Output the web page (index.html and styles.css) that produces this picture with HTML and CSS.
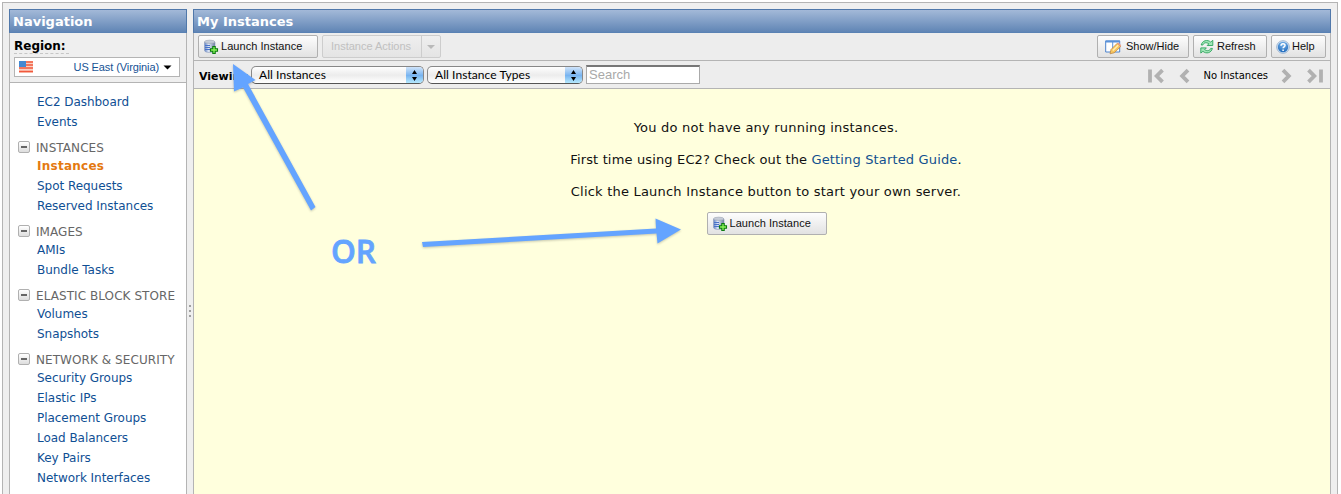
FILE: index.html
```html
<!DOCTYPE html>
<html lang="en">
<head>
<meta charset="utf-8">
<title>My Instances</title>
<link rel="stylesheet" href="styles.css">
</head>
<body>
<svg width="0" height="0" class="defs">
  <defs>
    <linearGradient id="cyl" x1="0" x2="1"><stop offset="0" stop-color="#5f82c8"/><stop offset=".4" stop-color="#e0e8f6"/><stop offset="1" stop-color="#6d7ca0"/></linearGradient>
    <radialGradient id="ball" cx=".5" cy=".25" r=".8"><stop offset="0" stop-color="#7db8ee"/><stop offset="1" stop-color="#1c66b8"/></radialGradient>
    <symbol id="server" viewBox="0 0 16 16">
      <path d="M1.500 3v8.500c0 1 2 2 5 2s5.500-1 5.500-2V3z" fill="url(#cyl)" stroke="#8c9aba" stroke-width=".6"/>
      <ellipse cx="6.700" cy="2.800" rx="5.200" ry="1.600" fill="#c6ccd8" stroke="#979fb0" stroke-width=".6"/>
      <path d="M2 6.500h5M2 8.500h5M2 10.500h5" stroke="#4a73c8" stroke-width="1"/>
      <path d="M9.800 7.500h2.400v2.300h2.300v2.400h-2.300v2.300H9.800v-2.300H7.500V9.800h2.300z" fill="#8cf45a" stroke="#0b7a10" stroke-width="1.100"/>
    </symbol>
  </defs>
</svg>
<div class="frame">
  <aside class="nav">
    <h2 class="bar">Navigation</h2>
    <div class="region">
      <div class="region-label">Region:</div>
      <div class="region-select">
        <svg width="14" height="12" viewBox="0 0 14 12"><path fill="#fbd0c2" d="M0 0h14v12H0z"/><path d="M0 1h14M0 4h14M0 7h14M0 10.500h14" stroke="#f1583c" stroke-width="1.700"/><path fill="#4489d2" d="M0 0h7v6H0z"/></svg>
        <span class="region-name">US East (Virginia)</span>
        <svg width="9" height="5" viewBox="0 0 9 5"><path d="M.5.500h8L4.500 4.500z"/></svg>
      </div>
    </div>
    <ul class="links first"><li>EC2 Dashboard</li><li>Events</li></ul>
    <h3 class="group"><i class="minus"></i>INSTANCES</h3>
    <ul class="links"><li class="current">Instances</li><li>Spot Requests</li><li>Reserved Instances</li></ul>
    <h3 class="group"><i class="minus"></i>IMAGES</h3>
    <ul class="links"><li>AMIs</li><li>Bundle Tasks</li></ul>
    <h3 class="group"><i class="minus"></i>ELASTIC BLOCK STORE</h3>
    <ul class="links"><li>Volumes</li><li>Snapshots</li></ul>
    <h3 class="group"><i class="minus"></i>NETWORK &amp; SECURITY</h3>
    <ul class="links"><li>Security Groups</li><li>Elastic IPs</li><li>Placement Groups</li><li>Load Balancers</li><li>Key Pairs</li><li>Network Interfaces</li></ul>
  </aside>
  <div class="splitter"><i></i><i></i><i></i></div>
  <main class="main">
    <h2 class="bar">My Instances</h2>
    <div class="toolbar">
      <button class="btn launch"><svg width="16" height="16"><use href="#server"/></svg><span>Launch Instance</span></button>
      <div class="btn actions"><span class="actions-text">Instance Actions</span><span class="actions-arrow"><svg width="8" height="4" viewBox="0 0 8 4"><path fill="#b9b9b9" d="M0 0h8L4 4z"/></svg></span></div>
      <span class="grow"></span>
      <button class="btn show"><svg width="17" height="16" viewBox="0 0 17 16"><path d="M.7 2h14v11H.7z" fill="#fff" stroke="#4a82cc" stroke-width="1"/><path d="M.5 1.500h14.500v2H.5zM7.200 3h1v10h-1z" fill="#5a92da"/><path d="M5 14.800l1-4.300 6.200-6.200 3.500 3.300-6.500 6.200z" fill="#f8c65e" stroke="#b8803c" stroke-width=".7"/><path d="M7.800 11.500l5.400-5.300" stroke="#fff0b8" stroke-width="1.300"/><path d="M12.200 4.500l1.200-1 2.800 2.700-.8 1.300z" fill="#ef9d84"/></svg><span>Show/Hide</span></button>
      <button class="btn refresh"><svg width="16" height="16" viewBox="0 0 16 16"><g id="half"><path d="M2.200 6C3.200 1.500 8.400.1 11.700 3.100L13.800 1.300v5.200H8.200l1.700-1.700C7.500 3 4.600 3.600 3.900 6z" fill="#a0e6b8" stroke="#2fa45c" stroke-width=".9"/></g><use href="#half" transform="rotate(180 7.800 7.700)"/></svg><span>Refresh</span></button>
      <button class="btn help"><svg width="14" height="14" viewBox="0 0 14 14"><circle cx="7" cy="7" r="6.300" fill="#d9e9f8" stroke="#88a5c8" stroke-width=".8"/><circle cx="7" cy="7" r="5.200" fill="url(#ball)"/><path d="M5 5.700C5.100 3.200 9 3.300 9 5.400 9 6.900 7.100 6.800 7.100 8.300M7.100 9.400v1.500" fill="none" stroke="#fff" stroke-width="1.500"/></svg><span>Help</span></button>
    </div>
    <div class="filters">
      <b class="viewing">Viewing</b>
      <div class="select s1"><span>All Instances</span><i class="knob"><svg width="7" height="11" viewBox="0 0 7 11"><path d="M3.500 0L6 4H1zM3.500 11L6 7H1z"/></svg></i></div>
      <div class="select s2"><span>All Instance Types</span><i class="knob"><svg width="7" height="11" viewBox="0 0 7 11"><path d="M3.500 0L6 4H1zM3.500 11L6 7H1z"/></svg></i></div>
      <input class="search" placeholder="Search">
      <span class="grow"></span>
      <svg class="pager" width="42" height="16" viewBox="0 0 42 16" fill="none" stroke="#b1b1b1" stroke-width="3.800"><path d="M2 1.500v13"/><path d="M14.500 2.200L8.700 8l5.800 5.800M40 2.200L34.200 8l5.800 5.800"/></svg>
      <span class="count">No Instances</span>
      <svg class="pager pager-next" width="42" height="16" viewBox="0 0 42 16" fill="none" stroke="#b1b1b1" stroke-width="3.800"><path d="M2 2.200L7.800 8 2 13.800M27.500 2.200L33.300 8l-5.800 5.800"/><path d="M40 1.500v13"/></svg>
    </div>
    <div class="content">
      <p>You do not have any running instances.</p>
      <p class="guide">First time using EC2? Check out the <a>Getting Started Guide</a>.</p>
      <p>Click the Launch Instance button to start your own server.</p>
      <button class="btn launch"><svg width="16" height="16"><use href="#server"/></svg><span>Launch Instance</span></button>
    </div>
  </main>
</div>
<svg class="notes" width="1341" height="494" fill="#64a4ff">
  <g class="arrows">
    <path d="M233 64L255.500 80 248 84 315.500 207 311 210.500 243 87.500 234 91.500z"/>
    <path d="M422 242L656 228.500 655.500 218.500 681 229.500 657.500 243.500 656.500 233.500 423 247z"/>
  </g>
  <text x="331" y="263" textLength="45" lengthAdjust="spacingAndGlyphs">OR</text>
</svg>
</body>
</html>
```
FILE: styles.css
```css
* { box-sizing: border-box; }
body { margin: 0; width: 1341px; height: 494px; overflow: hidden; padding: 2px 3px 0 2px; background: #fff; font: 12px "DejaVu Sans", sans-serif; }
h2, h3, p, ul { margin: 0; padding: 0; list-style: none; }
.defs { position: absolute; }
svg { flex: none; }
.frame { display: flex; height: 500px; padding: 6px 6px 0; background: #efefef; border: 1px solid #b4b4b4; }
.nav { width: 178px; background: #fff; border: 1px solid #b4b4b4; border-top: 0; white-space: nowrap; }
.bar { margin: 0 -1px; height: 24px; padding-left: 3px; border: 1px solid #5078aa; border-bottom-color: #5a82b4; background: linear-gradient(#a3b9d8, #6085b5); color: #fff; font: bold 13px/23px "DejaVu Sans", sans-serif; }
.region { height: 50px; padding: 4px 6px 0 4px; background: #efefef; border-bottom: 1px solid #b4b4b4; }
.region-label { width: 55px; height: 17px; font: bold 12px/18px "DejaVu Sans", sans-serif; border-bottom: 1px dashed #c6c6c6; }
.region-select { display: flex; align-items: center; height: 20px; margin-top: 3px; padding: 0 7px 0 4px; background: #fff; border: 1px solid #b4b4b4; color: #165294; font: 11px "Liberation Sans", sans-serif; letter-spacing: -.1px; }
.region-name { margin-left: auto; margin-right: 4px; }
.links { color: #0f4f94; line-height: 20px; padding-left: 27px; letter-spacing: -.04px; }
.first { padding-top: 9px; }
.current { color: #e47911; font-weight: bold; letter-spacing: .25px; }
.group { display: flex; align-items: center; gap: 6px; height: 16px; margin-top: 8px; padding-left: 8px; color: #666; font-weight: normal; font-size: 12px; letter-spacing: .07px; }
.minus { position: relative; width: 12px; height: 12px; margin-top: -2px; border: 1px solid #b0b0b0; border-radius: 2px; background: linear-gradient(#fff, #ddd); }
.minus::after { content: ""; position: absolute; left: 2px; top: 4px; width: 6px; height: 2px; background: #666; }
.splitter { display: flex; flex-direction: column; gap: 3px; width: 6px; padding: 296px 0 0 2px; }
.splitter i { width: 2px; height: 2px; background: #a0a0a0; }
.main { width: 1138px; background: #ffd; border: 1px solid #b4b4b4; border-top: 0; }
.toolbar, .filters { display: flex; background: #ededed; border-bottom: 1px solid #b4b4b4; }
.toolbar { height: 28px; padding: 2px 4px 0 4px; }
.btn { display: flex; align-items: center; height: 23px; padding: 0 0 0 5px; border: 1px solid #b0b0b0; border-radius: 2px; background: linear-gradient(#fdfdfd, #e2e2e2); color: #111; font: 11px "Liberation Sans", sans-serif; white-space: nowrap; }
.btn > span:not(.actions-arrow) { position: relative; top: -1px; }
.launch { width: 120px; padding-left: 4px; }
.launch span { margin-left: 2px; letter-spacing: .04px; }
.actions { width: 119px; margin-left: 4px; padding: 0; color: #c0c0c0; border-color: #cdcdcd; background: linear-gradient(#efefef, #e4e4e4); }
.actions-text { width: 98px; padding-left: 8px; }
.actions-arrow { display: flex; align-items: center; justify-content: center; height: 21px; flex: 1; border-left: 1px solid #cdcdcd; }
.grow { flex: 1; }
.show { width: 92px; padding-left: 7px; }
.show span { margin-left: 4px; }
.refresh { width: 74px; margin-left: 4px; }
.refresh span { margin-left: 2px; }
.help { width: 55px; margin-left: 4px; padding-left: 4px; }
.help span { margin-left: 2px; }
.filters { height: 28px; padding-left: 5px; align-items: center; }
.viewing { width: 52px; font-size: 11px; white-space: nowrap; padding-top: 3px; overflow: hidden; }
.select { display: flex; justify-content: space-between; align-items: center; height: 18px; padding-left: 7px; border: 1px solid #888; border-bottom-color: #555; border-radius: 5px; background: linear-gradient(#fff, #ececec 50%, #fff); font: 12px Lato, sans-serif; letter-spacing: .06px; overflow: hidden; }
.s1 { width: 173px; }
.s2 { width: 156px; margin-left: 3px; }
.knob { display: flex; align-items: center; justify-content: center; width: 17px; height: 18px; background: linear-gradient(#d0e4fa, #78b4f0 50%, #bdf0ff); border-top: 1px solid #2b2b9b; }
.search { width: 114px; height: 19px; margin-left: 3px; padding: 0 2px 2px; border: 1px solid #aaa; border-top: 2px solid #777; font: 13px "Liberation Sans", sans-serif; }
.search::placeholder { color: #a9a9a9; }
.count { margin: 2px 13px 0; font-size: 10px; }
.pager { margin-top: 2px; }
.pager-next { margin-right: 7px; }
.content { display: flex; flex-direction: column; align-items: center; padding: 30px 0 0 8px; font-size: 13px; color: #111; }
.content p { height: 32px; line-height: 18px; letter-spacing: .21px; white-space: nowrap; }
.content .guide { letter-spacing: .15px; }
.content a { color: #11508f; }
.content .launch { margin-top: -3px; margin-left: 1px; }
.notes { position: absolute; left: 0; top: 0; font: 600 33px "Open Sans", sans-serif; }
.notes text { stroke: #64a4ff; stroke-width: .8px; }
.arrows { filter: drop-shadow(0 1px 1px rgba(0,0,0,.22)); }
```
